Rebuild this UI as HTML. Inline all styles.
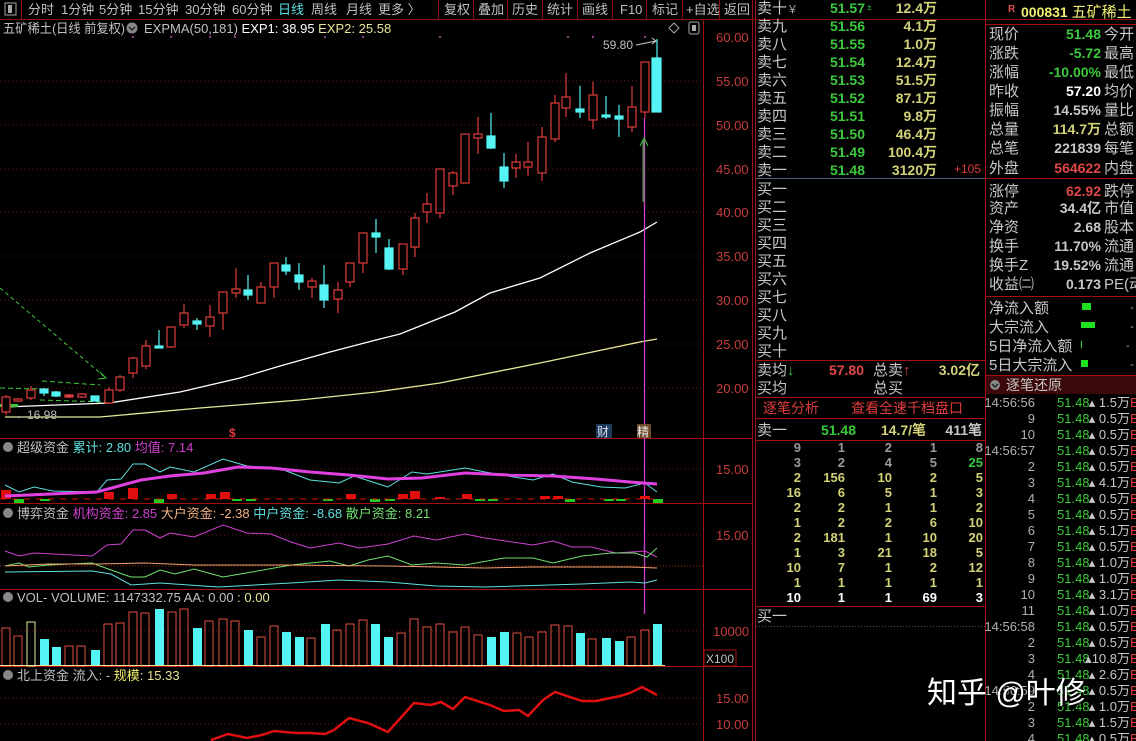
<!DOCTYPE html>
<html><head><meta charset="utf-8"><style>
html,body{margin:0;padding:0;background:#000;width:1136px;height:741px;overflow:hidden}
svg{display:block}
text{font-family:"Liberation Sans","Noto Sans CJK SC",sans-serif}
.l{fill:#c8c8c8;font-size:15px}
.p{fill:#3cc83c;font-size:14px;font-weight:bold}
.v{fill:#d2d278;font-size:14px;font-weight:bold}
.ax{fill:#c83c3c;font-size:13px}
.y{fill:#d2d278;font-size:13px;font-weight:bold}
.tb{fill:#c0c0c0;font-size:13px}
</style></head><body>
<svg width="1136" height="741" viewBox="0 0 1136 741" xmlns="http://www.w3.org/2000/svg">
<rect width="1136" height="741" fill="#000"/>
<g stroke="#8a1010" stroke-width="1">
<line x1="0" y1="19.5" x2="1136" y2="19.5"/>
<line x1="21.5" y1="0" x2="21.5" y2="19"/>
<line x1="438.5" y1="0" x2="438.5" y2="19"/><line x1="473.5" y1="0" x2="473.5" y2="19"/><line x1="507.5" y1="0" x2="507.5" y2="19"/><line x1="542.5" y1="0" x2="542.5" y2="19"/><line x1="577.5" y1="0" x2="577.5" y2="19"/><line x1="612.5" y1="0" x2="612.5" y2="19"/><line x1="646.5" y1="0" x2="646.5" y2="19"/><line x1="682.5" y1="0" x2="682.5" y2="19"/><line x1="719.5" y1="0" x2="719.5" y2="19"/><line x1="752.5" y1="0" x2="752.5" y2="19"/>
</g>
<rect x="5" y="3" width="11" height="12" fill="none" stroke="#aaa"/><rect x="8" y="5" width="4" height="8" fill="#aaa"/>
<g class="tb">
<text x="28" y="14">分时</text><text x="61" y="14">1分钟</text><text x="99" y="14">5分钟</text><text x="138" y="14">15分钟</text><text x="185" y="14">30分钟</text><text x="232" y="14">60分钟</text><text x="278" y="14" fill="#5ee0e0">日线</text><text x="311" y="14">周线</text><text x="346" y="14">月线</text><text x="378" y="14">更多 〉</text>
<text x="444" y="14">复权</text><text x="478" y="14">叠加</text><text x="512" y="14">历史</text><text x="547" y="14">统计</text><text x="582" y="14">画线</text><text x="620" y="14">F10</text><text x="652" y="14">标记</text><text x="686" y="14">+自选</text><text x="724" y="14">返回</text>
</g>
<text x="3" y="33" class="tb" textLength="122" lengthAdjust="spacingAndGlyphs">五矿稀土(日线 前复权)</text>
<circle cx="132" cy="28" r="5.5" fill="#888"/><path d="M129 27 l3 3 l3 -3" stroke="#222" stroke-width="1.5" fill="none"/>
<text x="144" y="33" class="tb">EXPMA(50,181)  <tspan fill="#fff">EXP1: 38.95</tspan>  <tspan fill="#e6e69a">EXP2: 25.58</tspan></text>
<path d="M674 23 l5 5 l-5 5 l-5 -5z" stroke="#aaa" fill="none"/>
<rect x="689" y="22" width="10" height="12" rx="2" fill="none" stroke="#aaa"/><rect x="692" y="25" width="4" height="6" fill="#aaa"/>
<g stroke="#a01010">
<line x1="703.5" y1="20" x2="703.5" y2="741"/>
<line x1="752.5" y1="0" x2="752.5" y2="741"/>
<line x1="0" y1="438.5" x2="753" y2="438.5"/>
<line x1="0" y1="503.5" x2="753" y2="503.5"/>
<line x1="0" y1="589.5" x2="753" y2="589.5"/>
<line x1="0" y1="666.5" x2="753" y2="666.5"/>
</g>
<g stroke="#6a1414" stroke-dasharray="1 3">
<line x1="0" y1="81" x2="703" y2="81"/><line x1="0" y1="125" x2="703" y2="125"/><line x1="0" y1="169" x2="703" y2="169"/><line x1="0" y1="212" x2="703" y2="212"/><line x1="0" y1="256" x2="703" y2="256"/><line x1="0" y1="300" x2="703" y2="300"/><line x1="0" y1="344" x2="703" y2="344"/><line x1="0" y1="388" x2="703" y2="388"/>
<line x1="0" y1="469" x2="703" y2="469"/><line x1="0" y1="535" x2="703" y2="535"/><line x1="0" y1="631" x2="703" y2="631"/><line x1="0" y1="698" x2="703" y2="698"/><line x1="0" y1="724" x2="703" y2="724"/>
</g>
<g class="ax">
<text x="716" y="42">60.00</text><text x="716" y="86">55.00</text><text x="716" y="130">50.00</text><text x="716" y="174">45.00</text><text x="716" y="217">40.00</text><text x="716" y="261">35.00</text><text x="716" y="305">30.00</text><text x="716" y="349">25.00</text><text x="716" y="393">20.00</text>
<text x="716" y="474">15.00</text><text x="716" y="540">15.00</text><text x="713" y="636">10000</text><text x="716" y="703">15.00</text><text x="716" y="729">10.00</text>
</g>
<rect x="704" y="650" width="32" height="16" fill="none" stroke="#a01010"/><text x="706" y="663" fill="#c0c0c0" font-size="12">X100</text>
<g fill="#c050c0"><circle cx="133" cy="37" r="1"/><circle cx="171" cy="37" r="1"/><circle cx="210" cy="37" r="1"/><circle cx="235" cy="37" r="1"/><circle cx="325" cy="37" r="1"/><circle cx="363" cy="37" r="1"/><circle cx="440" cy="37" r="1"/><circle cx="568" cy="37" r="1"/><circle cx="593" cy="37" r="1"/><circle cx="645" cy="37" r="1"/></g>
<polyline fill="none" stroke="#fff" stroke-width="1.3" points="5,407 109,403 180,392 240,378 280,366 330,352 376,340 400,334 455,312 490,293 540,278 590,253 640,232 657,222"/>
<polyline fill="none" stroke="#e6e69a" stroke-width="1.3" points="5,417 100,417 200,408 300,400 376,392 440,383 540,363 640,342 657,339"/>
<line x1="0" y1="288" x2="106" y2="378" stroke="#3cc83c" stroke-dasharray="4 3"/>
<path d="M100 372 l6 6 l-8 1" stroke="#3cc83c" fill="none"/>
<g stroke="#3cc83c" stroke-dasharray="5 3"><line x1="0" y1="388" x2="40" y2="389"/><line x1="42" y1="381" x2="100" y2="385"/><line x1="40" y1="400" x2="105" y2="402"/></g>
<rect x="0" y="404" width="18" height="3" fill="#3cc83c"/>
<text x="15" y="419" fill="#c0c0c0" font-size="12">←16.98</text>
<line x1="644.5" y1="118" x2="644.5" y2="614" stroke="#d040d0" stroke-width="1.3"/>
<line x1="643.5" y1="140" x2="643.5" y2="202" stroke="#6a8a6a" stroke-width="2"/>
<path d="M640 146 l4 -8 l4 8" stroke="#3cc83c" fill="none"/>
<text x="603" y="49" fill="#c0c0c0" font-size="12">59.80</text><path d="M636 45 l20 -4 M652 38 l4 3 l-4 3" stroke="#ccc" fill="none"/>
<g stroke="#e03c3c" fill="#000" stroke-width="1.2">
<path d="M6 395V415M18 398V402M31 386V400M69 394V398M82 393V398M109 387V404M120 375V392M133 357V378M146 340V369M171 327V348M184 304V328M210 305V337M223 292V330M236 268V298M261 282V303M274 263V298M312 278V298M338 282V313M350 263V287M363 233V273M403 244V275M415 213V257M427 193V223M440 169V218M453 171V195M465 134V183M478 117V154M516 154V178M528 142V176M542 127V181M555 95V142M566 73V117M593 82V129M632 86V132M645 62V118"/>
<rect x="2" y="397" width="8" height="15"/><rect x="14" y="399" width="8" height="2"/><rect x="27" y="390" width="8" height="8"/><rect x="65" y="395" width="8" height="2" fill="#e03c3c"/><rect x="78" y="394" width="8" height="3"/><rect x="105" y="390" width="8" height="13"/><rect x="116" y="377" width="8" height="13"/><rect x="129" y="358" width="8" height="15"/><rect x="142" y="346" width="8" height="20"/><rect x="167" y="327" width="8" height="20"/><rect x="180" y="313" width="8" height="12"/><rect x="206" y="317" width="8" height="9"/><rect x="219" y="292" width="8" height="21"/><rect x="232" y="289" width="8" height="4"/><rect x="257" y="287" width="8" height="16"/><rect x="270" y="263" width="8" height="24"/><rect x="308" y="281" width="8" height="6"/><rect x="334" y="290" width="8" height="9"/><rect x="346" y="263" width="8" height="19"/><rect x="359" y="233" width="8" height="30"/><rect x="399" y="244" width="8" height="25"/><rect x="411" y="218" width="8" height="29"/><rect x="423" y="204" width="8" height="8"/><rect x="436" y="169" width="8" height="44"/><rect x="449" y="173" width="8" height="13"/><rect x="461" y="134" width="8" height="49"/><rect x="474" y="134" width="8" height="4"/><rect x="512" y="162" width="8" height="6"/><rect x="524" y="162" width="8" height="5"/><rect x="538" y="137" width="8" height="36"/><rect x="551" y="103" width="8" height="36"/><rect x="562" y="97" width="8" height="11"/><rect x="589" y="95" width="8" height="25"/><rect x="628" y="107" width="8" height="20"/><rect x="641" y="62" width="8" height="50"/>
</g>
<g stroke="#54f4f4" fill="#54f4f4" stroke-width="1.2">
<path d="M44 388V396M56 391V397M95 396V401M159 330V348M197 318V330M248 275V300M286 257V275M299 263V290M324 265V308M376 219V253M389 239V270M491 113V149M504 153V188M580 86V118M606 96V119M619 105V137M657 39V112"/>
<rect x="40" y="389" width="8" height="4"/><rect x="52" y="392" width="8" height="4"/><rect x="91" y="396" width="8" height="5"/><rect x="155" y="346" width="8" height="2"/><rect x="193" y="321" width="8" height="3"/><rect x="244" y="290" width="8" height="5"/><rect x="282" y="265" width="8" height="6"/><rect x="295" y="275" width="8" height="7"/><rect x="320" y="285" width="8" height="15"/><rect x="372" y="233" width="8" height="4"/><rect x="385" y="248" width="8" height="21"/><rect x="487" y="136" width="8" height="12"/><rect x="500" y="167" width="8" height="14"/><rect x="576" y="109" width="8" height="3"/><rect x="602" y="115" width="8" height="2"/><rect x="615" y="116" width="8" height="3"/><rect x="652" y="58" width="9" height="54"/>
</g>
<text x="229" y="437" fill="#e03c3c" font-size="12" font-weight="bold">$</text>
<rect x="596" y="424" width="16" height="14" fill="#1c3a5a"/><text x="597" y="436" fill="#dde" font-size="12">财</text>
<rect x="637" y="424" width="14" height="14" fill="#6a4a2a"/><text x="637" y="436" fill="#eee" font-size="12">精</text>
<circle cx="8" cy="447" r="5" fill="#888"/>
<text x="17" y="452" class="tb">超级资金 <tspan fill="#5ee0e0">累计: 2.80</tspan> <tspan fill="#d040d0">均值: 7.14</tspan></text>
<g fill="#e01010"><rect x="1" y="490" width="10" height="9"/><rect x="104" y="492" width="10" height="7"/><rect x="128" y="488" width="10" height="11"/><rect x="167" y="494" width="10" height="5"/><rect x="206" y="494" width="10" height="5"/><rect x="220" y="492" width="10" height="7"/><rect x="346" y="494" width="10" height="5"/><rect x="398" y="494" width="10" height="5"/><rect x="410" y="491" width="10" height="8"/><rect x="435" y="497" width="10" height="2"/><rect x="462" y="494" width="10" height="5"/><rect x="540" y="496" width="10" height="3"/><rect x="553" y="496" width="10" height="3"/><rect x="640" y="496" width="10" height="3"/></g>
<g fill="#20d020"><rect x="14" y="499" width="10" height="4"/><rect x="40" y="499" width="10" height="2"/><rect x="154" y="499" width="10" height="4"/><rect x="232" y="499" width="10" height="2"/><rect x="246" y="499" width="10" height="2"/><rect x="323" y="499" width="10" height="2"/><rect x="370" y="499" width="10" height="3"/><rect x="385" y="499" width="10" height="2"/><rect x="475" y="499" width="10" height="2"/><rect x="488" y="499" width="10" height="2"/><rect x="565" y="499" width="10" height="3"/><rect x="604" y="499" width="10" height="2"/><rect x="616" y="499" width="10" height="2"/><rect x="653" y="499" width="10" height="4"/></g>
<g stroke="#e01010" stroke-dasharray="6 6"><line x1="0" y1="499" x2="660" y2="499"/></g>
<polyline fill="none" stroke="#5ee0e0" points="5,485 19,492 34,487 53,491 97,492 107,480 121,479 133,464 145,464 160,472 170,467 194,472 223,459 247,466 281,469 310,480 339,483 354,476 388,487 412,472 427,474 465,468 485,472 514,477 533,480 553,474 572,482 601,487 625,488 645,483 657,492"/>
<polyline fill="none" stroke="#e040e0" stroke-width="3" points="5,496 97,492 141,480 170,476 204,473 238,467 271,468 310,472 349,475 388,479 422,478 465,473 509,475 553,476 596,479 630,482 657,484"/>
<circle cx="8" cy="513" r="5" fill="#888"/>
<text x="17" y="518" class="tb">博弈资金 <tspan fill="#d040d0">机构资金: 2.85</tspan> <tspan fill="#f0b080">大户资金: -2.38</tspan> <tspan fill="#5ee0e0">中户资金: -8.68</tspan> <tspan fill="#70e070">散户资金: 8.21</tspan></text>
<line x1="0" y1="566" x2="703" y2="566" stroke="#a03010" stroke-dasharray="1 2"/>
<polyline fill="none" stroke="#d040d0" points="5,551 19,556 34,553 92,556 107,545 121,544 133,530 145,530 160,538 170,533 194,537 223,525 247,533 271,534 291,542 310,548 339,543 359,548 388,544 414,536 436,540 465,534 485,538 533,545 553,541 572,547 591,547 616,553 645,551 657,557"/>
<polyline fill="none" stroke="#70e070" points="5,566 19,563 29,567 48,565 92,563 111,570 131,577 145,577 160,570 175,574 194,569 223,577 252,572 291,565 330,561 349,566 368,560 388,556 412,565 436,563 465,565 504,558 533,558 553,563 582,556 611,553 635,553 647,557 657,548"/>
<polyline fill="none" stroke="#f0a070" points="5,566 48,564 97,564 145,563 194,565 291,565 388,566 436,567 485,568 533,567 582,567 630,567 657,568"/>
<polyline fill="none" stroke="#5ee0e0" points="5,572 92,571 111,574 131,585 160,583 218,587 291,583 339,580 388,582 436,586 485,587 582,584 630,582 645,583 657,580"/>
<circle cx="8" cy="597" r="5" fill="#888"/>
<text x="17" y="602" class="tb">VOL- VOLUME: 1147332.75 AA: 0.00 <tspan fill="#e6e69a"> : 0.00</tspan></text>
<g stroke="#e05040" fill="none">
<rect x="2" y="628" width="8" height="38"/><rect x="14" y="636" width="8" height="30"/><rect x="27" y="622" width="8" height="44" stroke="#e6e69a"/><rect x="65" y="646" width="8" height="20"/><rect x="77" y="646" width="8" height="20"/><rect x="104" y="624" width="8" height="42"/><rect x="116" y="623" width="8" height="43"/><rect x="129" y="612" width="8" height="54"/><rect x="141" y="613" width="8" height="53"/><rect x="168" y="612" width="8" height="54"/><rect x="180" y="609" width="8" height="57"/><rect x="205" y="621" width="8" height="45"/><rect x="219" y="619" width="8" height="47"/><rect x="231" y="621" width="8" height="45"/><rect x="257" y="637" width="8" height="29"/><rect x="270" y="626" width="8" height="40"/><rect x="307" y="638" width="8" height="28"/><rect x="333" y="630" width="8" height="36"/><rect x="346" y="624" width="8" height="42"/><rect x="359" y="620" width="8" height="46"/><rect x="397" y="633" width="8" height="33"/><rect x="410" y="619" width="8" height="47"/><rect x="423" y="627" width="8" height="39"/><rect x="436" y="624" width="8" height="42"/><rect x="449" y="632" width="8" height="34"/><rect x="461" y="627" width="8" height="39"/><rect x="474" y="635" width="8" height="31"/><rect x="513" y="633" width="8" height="33"/><rect x="525" y="637" width="8" height="29"/><rect x="538" y="632" width="8" height="34"/><rect x="551" y="625" width="8" height="41"/><rect x="564" y="626" width="8" height="40"/><rect x="588" y="639" width="8" height="27"/><rect x="627" y="637" width="8" height="29"/><rect x="641" y="630" width="8" height="36"/>
</g>
<g fill="#54f4f4">
<rect x="40" y="639" width="9" height="27"/><rect x="52" y="647" width="9" height="19"/><rect x="91" y="650" width="9" height="16"/><rect x="155" y="609" width="9" height="57"/><rect x="193" y="628" width="9" height="38"/><rect x="244" y="630" width="9" height="36"/><rect x="282" y="632" width="9" height="34"/><rect x="295" y="637" width="9" height="29"/><rect x="321" y="624" width="9" height="42"/><rect x="371" y="624" width="9" height="42"/><rect x="384" y="637" width="9" height="29"/><rect x="487" y="637" width="9" height="29"/><rect x="500" y="632" width="9" height="34"/><rect x="576" y="633" width="9" height="33"/><rect x="602" y="638" width="9" height="28"/><rect x="615" y="641" width="9" height="25"/><rect x="653" y="624" width="9" height="42"/>
</g>
<line x1="0" y1="665.5" x2="665" y2="665.5" stroke="#e6e69a"/>
<circle cx="8" cy="675" r="5" fill="#888"/>
<text x="17" y="680" class="tb">北上资金 流入: - <tspan fill="#f0f070">规模</tspan><tspan fill="#e6e69a">: 15.33</tspan></text>
<polyline fill="none" stroke="#e01010" stroke-width="2.5" points="211,740 228,734 247,738 262,735 274,731 296,733 310,733 325,734 334,730 349,718 368,723 388,732 414,703 431,705 441,702 453,709 465,697 490,705 504,711 519,710 528,716 543,700 555,692 582,701 596,701 620,696 630,693 642,687 657,695"/>
<g stroke="#a01010">
<line x1="755.5" y1="0" x2="755.5" y2="741"/>
<line x1="985.5" y1="0" x2="985.5" y2="741"/>
<line x1="756" y1="360.5" x2="985" y2="360.5"/>
<line x1="756" y1="397.5" x2="985" y2="397.5"/>
<line x1="756" y1="418.5" x2="985" y2="418.5"/>
<line x1="756" y1="440.5" x2="985" y2="440.5"/>
<line x1="756" y1="606.5" x2="985" y2="606.5"/>
</g>
<line x1="756" y1="178.5" x2="985" y2="178.5" stroke="#506080"/>
<line x1="756" y1="626.5" x2="985" y2="626.5" stroke="#555" stroke-dasharray="1 2"/>
<g class="l">
<text x="757" y="13">卖十<tspan fill="#aaa" font-size="11">￥</tspan></text><text x="757" y="31">卖九</text><text x="757" y="49">卖八</text><text x="757" y="67">卖七</text><text x="757" y="85">卖六</text><text x="757" y="103">卖五</text><text x="757" y="121">卖四</text><text x="757" y="139">卖三</text><text x="757" y="157">卖二</text><text x="757" y="175">卖一</text>
<text x="757" y="194">买一</text><text x="757" y="212">买二</text><text x="757" y="230">买三</text><text x="757" y="248">买四</text><text x="757" y="266">买五</text><text x="757" y="284">买六</text><text x="757" y="302">买七</text><text x="757" y="320">买八</text><text x="757" y="338">买九</text><text x="757" y="356">买十</text>
<text x="757" y="375">卖均<tspan fill="#3cc83c">↓</tspan></text><text x="757" y="393">买均</text><text x="873" y="375">总卖<tspan fill="#e03c3c">↑</tspan></text><text x="873" y="393">总买</text>
<text x="757" y="435">卖一</text><text x="757" y="621">买一</text>
</g>
<g class="p" text-anchor="end">
<text x="865" y="13">51.57</text><text x="865" y="31">51.56</text><text x="865" y="49">51.55</text><text x="865" y="67">51.54</text><text x="865" y="85">51.53</text><text x="865" y="103">51.52</text><text x="865" y="121">51.51</text><text x="865" y="139">51.50</text><text x="865" y="157">51.49</text><text x="865" y="175">51.48</text>
<text x="856" y="435">51.48</text>
</g>
<text x="867" y="10" fill="#3cc83c" font-size="8">±</text>
<g class="v" text-anchor="end">
<text x="937" y="13">12.4万</text><text x="937" y="31">4.1万</text><text x="937" y="49">1.0万</text><text x="937" y="67">12.4万</text><text x="937" y="85">51.5万</text><text x="937" y="103">87.1万</text><text x="937" y="121">9.8万</text><text x="937" y="139">46.4万</text><text x="937" y="157">100.4万</text><text x="937" y="175">3120万</text>
<text x="980" y="375">3.02亿</text><text x="926" y="435">14.7/笔</text>
</g>
<text x="981" y="173" fill="#e03c3c" font-size="12" text-anchor="end">+105</text>
<text x="864" y="375" fill="#e04848" font-size="14" font-weight="bold" text-anchor="end">57.80</text>
<text x="982" y="435" fill="#c8c8c8" font-size="14" font-weight="bold" text-anchor="end">411笔</text>
<text x="763" y="413" fill="#e03c3c" font-size="14">逐笔分析</text><text x="851" y="413" fill="#e03c3c" font-size="14">查看全速千档盘口</text>
<g text-anchor="end" class="y">
<text x="801" y="452" fill="#9a9a9a">9</text><text x="845" y="452" fill="#9a9a9a">1</text><text x="892" y="452" fill="#9a9a9a">2</text><text x="937" y="452" fill="#9a9a9a">1</text><text x="983" y="452" fill="#9a9a9a">8</text>
<text x="801" y="467" fill="#9a9a9a">3</text><text x="845" y="467" fill="#9a9a9a">2</text><text x="892" y="467" fill="#9a9a9a">4</text><text x="937" y="467" fill="#9a9a9a">5</text><text x="983" y="467" fill="#3cc83c">25</text>
<text x="801" y="482">2</text><text x="845" y="482">156</text><text x="892" y="482">10</text><text x="937" y="482">2</text><text x="983" y="482">5</text>
<text x="801" y="497">16</text><text x="845" y="497">6</text><text x="892" y="497">5</text><text x="937" y="497">1</text><text x="983" y="497">3</text>
<text x="801" y="512">2</text><text x="845" y="512">2</text><text x="892" y="512">1</text><text x="937" y="512">1</text><text x="983" y="512">2</text>
<text x="801" y="527">1</text><text x="845" y="527">2</text><text x="892" y="527">2</text><text x="937" y="527">6</text><text x="983" y="527">10</text>
<text x="801" y="542">2</text><text x="845" y="542">181</text><text x="892" y="542">1</text><text x="937" y="542">10</text><text x="983" y="542">20</text>
<text x="801" y="557">1</text><text x="845" y="557">3</text><text x="892" y="557">21</text><text x="937" y="557">18</text><text x="983" y="557">5</text>
<text x="801" y="572">10</text><text x="845" y="572">7</text><text x="892" y="572">1</text><text x="937" y="572">2</text><text x="983" y="572">12</text>
<text x="801" y="587">1</text><text x="845" y="587">1</text><text x="892" y="587">1</text><text x="937" y="587">1</text><text x="983" y="587">1</text>
<text x="801" y="602" fill="#fff">10</text><text x="845" y="602" fill="#fff">1</text><text x="892" y="602" fill="#fff">1</text><text x="937" y="602" fill="#fff">69</text><text x="983" y="602" fill="#fff">3</text>
</g>
<g stroke="#a01010">
<line x1="986" y1="24.5" x2="1136" y2="24.5"/>
<line x1="986" y1="178.5" x2="1136" y2="178.5"/>
<line x1="986" y1="296.5" x2="1136" y2="296.5"/>
<line x1="986" y1="375.5" x2="1136" y2="375.5"/>
</g>
<rect x="986" y="376" width="150" height="18" fill="#3a0808"/>
<text x="1008" y="12" fill="#e05050" font-size="10" font-weight="bold">R</text>
<text x="1021" y="17" fill="#f0f070" font-size="14" font-weight="bold">000831 <tspan font-weight="normal" font-size="15">五矿稀土</tspan></text>
<g class="l">
<text x="989" y="39">现价</text><text x="989" y="58">涨跌</text><text x="989" y="77">涨幅</text><text x="989" y="96">昨收</text><text x="989" y="115">振幅</text><text x="989" y="134">总量</text><text x="989" y="153">总笔</text><text x="989" y="173">外盘</text>
<text x="989" y="196">涨停</text><text x="989" y="213">资产</text><text x="989" y="232">净资</text><text x="989" y="251">换手</text><text x="989" y="270">换手Z</text><text x="989" y="289">收益㈡</text>
<text x="989" y="313">净流入额</text><text x="989" y="332">大宗流入</text><text x="989" y="351">5日净流入额</text><text x="989" y="370">5日大宗流入</text>
<text x="1104" y="39">今开</text><text x="1104" y="58">最高</text><text x="1104" y="77">最低</text><text x="1104" y="96">均价</text><text x="1104" y="115">量比</text><text x="1104" y="134">总额</text><text x="1104" y="153">每笔</text><text x="1104" y="173">内盘</text>
<text x="1104" y="196">跌停</text><text x="1104" y="213">市值</text><text x="1104" y="232">股本</text><text x="1104" y="251">流通</text><text x="1104" y="270">流通</text><text x="1104" y="289">PE(动</text>
</g>
<g text-anchor="end" font-size="14" font-weight="bold">
<text x="1101" y="39" fill="#3cc83c">51.48</text><text x="1101" y="58" fill="#3cc83c">-5.72</text><text x="1101" y="77" fill="#3cc83c">-10.00%</text><text x="1101" y="96" fill="#fff">57.20</text><text x="1101" y="115" fill="#c8c8c8">14.55%</text><text x="1101" y="134" fill="#d2d278">114.7万</text><text x="1101" y="153" fill="#c8c8c8">221839</text><text x="1101" y="173" fill="#e04848">564622</text>
<text x="1101" y="196" fill="#e04848">62.92</text><text x="1101" y="213" fill="#c8c8c8">34.4亿</text><text x="1101" y="232" fill="#c8c8c8">2.68</text><text x="1101" y="251" fill="#c8c8c8">11.70%</text><text x="1101" y="270" fill="#c8c8c8">19.52%</text><text x="1101" y="289" fill="#c8c8c8">0.173</text>
</g>
<g fill="#20e020"><rect x="1082" y="303" width="9" height="7"/><rect x="1081" y="322" width="14" height="6"/><rect x="1081" y="360" width="7" height="7"/><rect x="1081" y="341" width="1" height="7"/></g>
<g fill="#aaa" font-size="11"><text x="1130" y="311">-</text><text x="1130" y="330">-</text><text x="1126" y="349">-</text><text x="1130" y="368">-</text></g>
<circle cx="995" cy="385" r="5" fill="#888"/><path d="M992 384 l3 3 l3 -3" stroke="#222" stroke-width="1.5" fill="none"/>
<text x="1006" y="390" fill="#c8c8c8" font-size="14">逐笔还原</text>
<g font-size="13" fill="#b0b0b0" text-anchor="end">
<text x="1035" y="407">14:56:56</text><text x="1035" y="423">9</text><text x="1035" y="439">10</text><text x="1035" y="455">14:56:57</text><text x="1035" y="471">2</text><text x="1035" y="487">3</text><text x="1035" y="503">4</text><text x="1035" y="519">5</text><text x="1035" y="535">6</text><text x="1035" y="551">7</text><text x="1035" y="567">8</text><text x="1035" y="583">9</text><text x="1035" y="599">10</text><text x="1035" y="615">11</text><text x="1035" y="631">14:56:58</text><text x="1035" y="647">2</text><text x="1035" y="663">3</text><text x="1035" y="679">4</text><text x="1035" y="695">14:56:59</text><text x="1035" y="711">2</text><text x="1035" y="727">3</text><text x="1035" y="743">4</text>
</g>
<g font-size="13" fill="#3cc83c">
<text x="1057" y="407">51.48</text><text x="1057" y="423">51.48</text><text x="1057" y="439">51.48</text><text x="1057" y="455">51.48</text><text x="1057" y="471">51.48</text><text x="1057" y="487">51.48</text><text x="1057" y="503">51.48</text><text x="1057" y="519">51.48</text><text x="1057" y="535">51.48</text><text x="1057" y="551">51.48</text><text x="1057" y="567">51.48</text><text x="1057" y="583">51.48</text><text x="1057" y="599">51.48</text><text x="1057" y="615">51.48</text><text x="1057" y="631">51.48</text><text x="1057" y="647">51.48</text><text x="1057" y="663">51.48</text><text x="1057" y="679">51.48</text><text x="1057" y="695">51.48</text><text x="1057" y="711">51.48</text><text x="1057" y="727">51.48</text><text x="1057" y="743">51.48</text>
</g>
<g font-size="13" fill="#c8c8c8" text-anchor="end">
<text x="1130" y="407">▴ 1.5万</text><text x="1130" y="423">▴ 0.5万</text><text x="1130" y="439">▴ 0.5万</text><text x="1130" y="455">▴ 0.5万</text><text x="1130" y="471">▴ 0.5万</text><text x="1130" y="487">▴ 4.1万</text><text x="1130" y="503">▴ 0.5万</text><text x="1130" y="519">▴ 0.5万</text><text x="1130" y="535">▴ 5.1万</text><text x="1130" y="551">▴ 0.5万</text><text x="1130" y="567">▴ 1.0万</text><text x="1130" y="583">▴ 1.0万</text><text x="1130" y="599">▴ 3.1万</text><text x="1130" y="615">▴ 1.0万</text><text x="1130" y="631">▴ 0.5万</text><text x="1130" y="647">▴ 0.5万</text><text x="1130" y="663">▴10.8万</text><text x="1130" y="679">▴ 2.6万</text><text x="1130" y="695">▴ 0.5万</text><text x="1130" y="711">▴ 1.0万</text><text x="1130" y="727">▴ 1.5万</text><text x="1130" y="743">▴ 0.5万</text>
</g>
<g fill="#e03c3c" font-size="13"><text x="1130" y="407">B</text><text x="1130" y="423">B</text><text x="1130" y="439">B</text><text x="1130" y="455">B</text><text x="1130" y="471">B</text><text x="1130" y="487">B</text><text x="1130" y="503">B</text><text x="1130" y="519">B</text><text x="1130" y="535">B</text><text x="1130" y="551">B</text><text x="1130" y="567">B</text><text x="1130" y="583">B</text><text x="1130" y="599">B</text><text x="1130" y="615">B</text><text x="1130" y="631">B</text><text x="1130" y="647">B</text><text x="1130" y="663">B</text><text x="1130" y="679">B</text><text x="1130" y="695">B</text><text x="1130" y="711">B</text><text x="1130" y="727">B</text><text x="1130" y="743">B</text></g>
<text x="927" y="703" fill="#000" opacity="0.6" font-size="30" font-family="'Noto Sans CJK SC',sans-serif" transform="translate(1.5,1.5)">知乎 @叶修</text>
<text x="927" y="703" fill="#fff" font-size="30" font-family="'Noto Sans CJK SC',sans-serif">知乎 @叶修</text>
</svg>
</body></html>
